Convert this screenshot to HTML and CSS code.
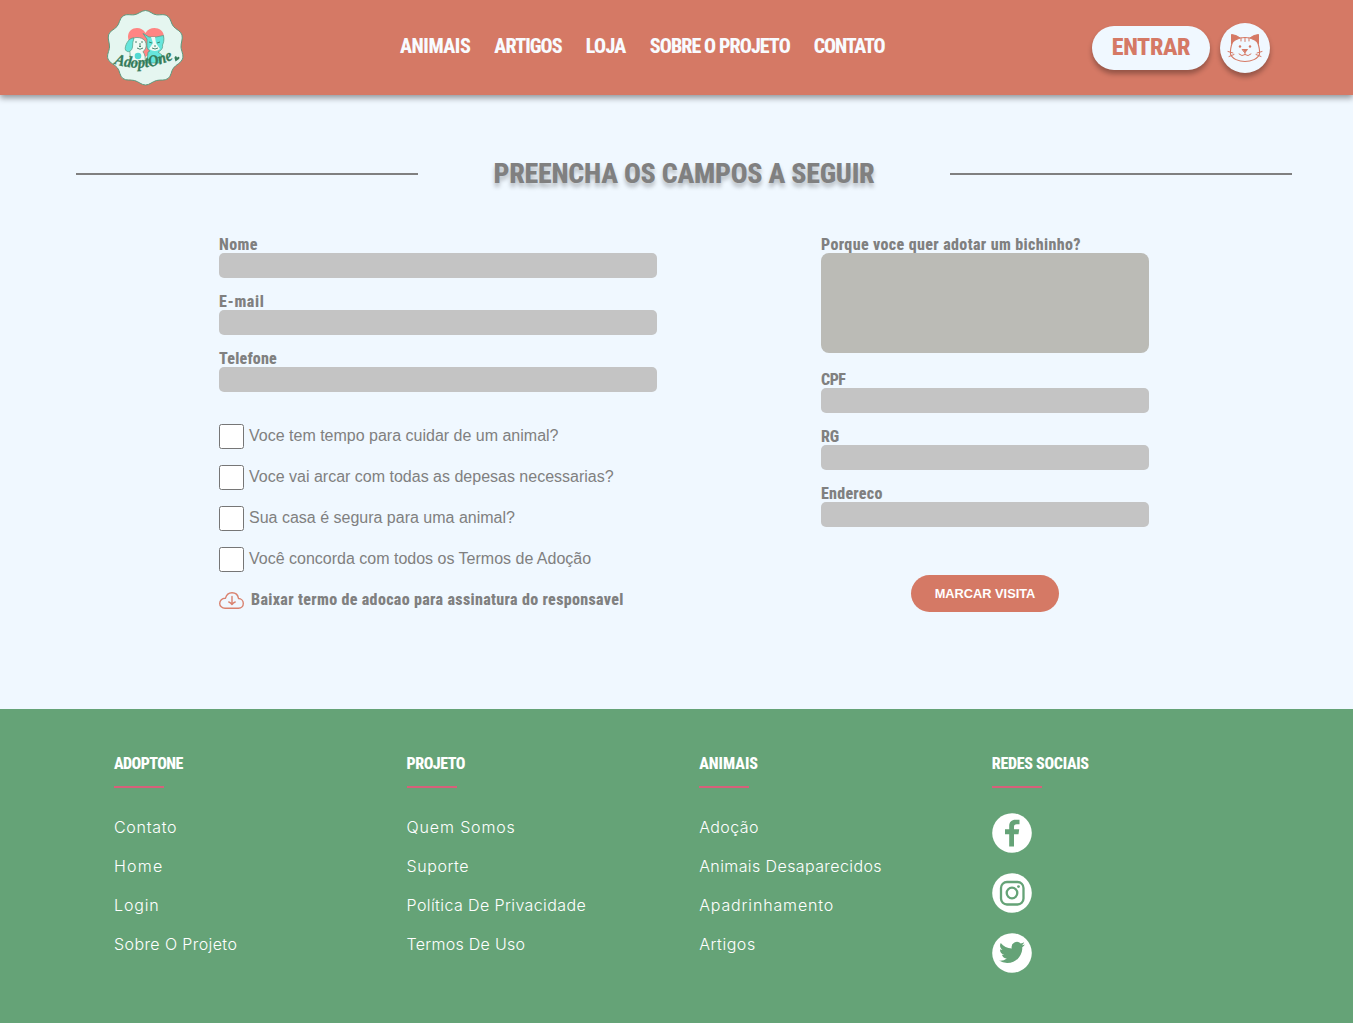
FILE: index.html
```html
<!DOCTYPE html>
<html lang="pt-BR">
<head>
<meta charset="utf-8">
<title>AdoptOne</title>
<link rel="stylesheet" href="styles.css">
</head>
<body>
<header class="header">
  <a class="logo" href="#" aria-label="AdoptOne">
    <svg width="78" height="78" viewBox="0 0 78 78">
      <path d="M39.500 1.500C43.500 1.500 46.500 5.500 50.500 5.800C54.500 6.200 58.500 4.500 62 7.500C65 10 65 14.500 67.500 17.500C70 20.500 75 22 76 26C77 30 74.800 34 75 38C75.200 42 78 46 76.500 50C75.200 54 70 55.500 67.500 59C65 62 65.500 67 62 69.500C58.500 72 54.500 70.500 50.500 71.500C46.500 72.500 43.500 76 39.500 76C35.500 76 32.500 72.500 28.500 71.500C24.500 70.500 20.500 72 17 69.500C13.500 67 14 62 11.500 59C9 55.500 3.300 54 2 50C.500 46 3.300 42 3.500 38C3.700 34 1.500 30 2.500 26C3.500 22 8.500 20.500 11 17.500C13.500 14.500 13.500 10 16.500 7.500C20 4.500 24 6.200 28 5.800C32 5.500 35.500 1.500 39.500 1.500Z" fill="#e5f6f0" stroke="#5b9a7e" stroke-width="1"/>
      <path d="M39.500 48C32 42 22 36 22 28C22 18 35 16 39.500 24C44 16 58 18 58 28C58 36 47 42 39.500 48Z" fill="#ff8583"/>
      <path d="M24 44C22 36 24 28 31 28.500C38 28.500 41 33 40 38C39.500 41 37 42 37 43Q40 46 39 54H24.500Z" fill="#effaf4" stroke="#519b82" stroke-width=".7"/>
      <path d="M28 29C22.500 28 18 38 19.500 41C22 44.500 26 42 26.500 38Q26.500 33 28 29Z" fill="#66e5dc" stroke="#519b82" stroke-width=".7"/>
      <path d="M37 24.500L43 28H50L57.500 26.500C58.500 31 57.500 34 56.500 36C57.500 41 52 43 52 43L56 46L55 54H41L42 43L44 42C39.500 40 41.500 34 41 30Z" fill="#66e5dc" stroke="#519b82" stroke-width=".7"/>
      <path d="M45 28L47 34L43 40Q49 44 54 40L50 34L49 28Z" fill="#effaf4"/>
      <circle cx="32" cy="47" r="3.300" fill="#53d9d2"/>
      <path d="M29 33h2M35 33h2M33 37.500h2M34 34v3M31 39q3 2.500 6 0M43 33l3 1M51 34l3-1M48 37h2M46 39q3 2 6 0" fill="none" stroke="#3b7c62" stroke-width=".9"/>
      <path id="logo-curve" d="M8 54.500Q37 65 70 49" fill="none"/>
      <text class="logo-text"><textPath href="#logo-curve" textLength="61" lengthAdjust="spacingAndGlyphs">AdoptOne</textPath></text>
      <path d="M68.500 49c0-2.500 2.500-2.500 2.500 0 1-2.500 3.500-1 2 1l-3.500 2.500Z" fill="#357b5a"/>
    </svg>
  </a>
  <nav class="nav">
    <a class="n1" href="#">ANIMAIS</a><a class="n2" href="#">ARTIGOS</a><a class="n3" href="#">LOJA</a><a class="n4" href="#">SOBRE O PROJETO</a><a class="n5" href="#">CONTATO</a>
  </nav>
  <div class="account">
    <a class="login" href="#">ENTRAR</a>
    <a class="avatar" href="#" aria-label="Perfil">
      <svg width="50" height="50" viewBox="0 0 50 50" fill="none" stroke="#d57965" stroke-width="1" stroke-linecap="round">
        <path d="M11.500 20.500L11.500 11.500Q17 12 20 15Q14.500 16.500 11.500 20.500ZM38.500 20.500L38.500 11.500Q33 12 30 15Q35.500 16.500 38.500 20.500Z" fill="#d57965"/>
        <path d="M20 15Q25 14 30 15M12.500 19Q10 26 10.500 31C12 36 19 38.500 25 38.500S38 36 39.500 31Q40 26 37.500 19" stroke-width="1.100"/>
        <path d="M21 15v3M25 14.500v4M29 15v3M8 28.500l5 1.500M9 33.500l5-2M42 28.500l-5 1.500M41 33.500l-5-2M25 29v2.500M19 31q3 3 6 .5q3 2.500 6-.5"/>
        <path d="M22.500 26.500h5l-2.500 3Z" fill="#d57965"/>
        <circle cx="20" cy="23.500" r="1.200" fill="#d57965" stroke="none"/><circle cx="30" cy="23.500" r="1.200" fill="#d57965" stroke="none"/>
      </svg>
    </a>
  </div>
</header>
<main class="main">
  <div class="title"><span class="rule"></span><h1>PREENCHA OS CAMPOS A SEGUIR</h1><span class="rule"></span></div>
  <form class="form">
    <div class="left">
      <label class="field"><span class="l1">Nome</span><input type="text"></label>
      <label class="field"><span class="l2">E-mail</span><input type="text"></label>
      <label class="field"><span class="l3">Telefone</span><input type="text"></label>
      <div class="checks">
        <label class="check"><input type="checkbox"><span>Voce tem tempo para cuidar de um animal?</span></label>
        <label class="check"><input type="checkbox"><span>Voce vai arcar com todas as depesas necessarias?</span></label>
        <label class="check"><input type="checkbox"><span>Sua casa é segura para uma animal?</span></label>
        <label class="check"><input type="checkbox"><span>Você concorda com todos os Termos de Adoção</span></label>
      </div>
      <a class="download" href="#">
        <svg width="25" height="17" viewBox="0 0 25 17" fill="none" stroke="#d9826f" stroke-width="1.400" stroke-linecap="round" stroke-linejoin="round"><path d="M6 16.300H19.500C22.500 16.300 24.300 14 24.300 11.500C24.300 8.500 22 6.500 19.500 6.500C19 3 16.500.700 13 .700C9.500.700 7.300 3 6.500 6.200C3 6 .700 8.500.700 11.500C.700 14 3 16.300 6 16.300ZM13 4.500V12.500M9.800 10Q11.500 10.500 13 12.500Q14.500 10.500 16.200 10"/></svg>
        <span>Baixar termo de adocao para assinatura do responsavel</span>
      </a>
    </div>
    <div class="right">
      <label class="field why"><span class="l4">Porque voce quer adotar um bichinho?</span><textarea></textarea></label>
      <label class="field"><span class="l5">CPF</span><input type="text"></label>
      <label class="field"><span class="l6">RG</span><input type="text"></label>
      <label class="field"><span class="l7">Endereco</span><input type="text"></label>
      <button class="submit" type="button">MARCAR VISITA</button>
    </div>
  </form>
</main>
<footer class="footer">
  <section class="col"><h2 class="f1">ADOPTONE</h2><ul><li class="s7">Contato</li><li class="s11">Home</li><li class="s8">Login</li><li class="s4">Sobre O Projeto</li></ul></section>
  <section class="col"><h2 class="f2">PROJETO</h2><ul><li class="s8">Quem Somos</li><li class="s5">Suporte</li><li class="s4">Política De Privacidade</li><li class="s3">Termos De Uso</li></ul></section>
  <section class="col"><h2 class="f3">ANIMAIS</h2><ul><li class="s4">Adoção</li><li class="s4">Animais Desaparecidos</li><li class="s8">Apadrinhamento</li><li class="s5">Artigos</li></ul></section>
  <section class="col"><h2 class="f4">REDES SOCIAIS</h2>
    <div class="social">
      <svg width="40" height="40" viewBox="0 0 40 40"><circle cx="20" cy="20" r="19.800" fill="#fff"/><path d="M17.200 33.500V21.200H13V16.200H17.200V13.500C17.200 9 19.500 6.800 23.500 6.800H27.500V11.200H24.800C22.500 11.200 22 12.200 22 14V16.200H27.200L26.500 21.200H22V33.500Z" fill="#65a377"/></svg>
      <svg width="40" height="40" viewBox="0 0 40 40" fill="none" stroke="#65a377" stroke-width="2.300"><circle cx="20" cy="20" r="19.800" fill="#fff" stroke="none"/><rect x="9" y="9" width="22.500" height="22.500" rx="6"/><circle cx="20" cy="20" r="5.300"/><circle cx="26.500" cy="13.600" r="1.400" fill="#65a377" stroke="none"/></svg>
      <svg width="40" height="40" viewBox="0 0 40 40"><circle cx="20" cy="20" r="19.800" fill="#fff"/><path transform="translate(7 6.500) scale(1.080)" d="M23.950 4.570a10 10 0 0 1-2.820.770 4.960 4.960 0 0 0 2.160-2.720c-.950.550-2 .950-3.130 1.180a4.920 4.920 0 0 0-8.380 4.480C7.690 8.100 4.070 6.130 1.640 3.160a4.820 4.820 0 0 0-.670 2.480c0 1.710.870 3.210 2.190 4.100a4.900 4.900 0 0 1-2.230-.620v.060a4.920 4.920 0 0 0 3.950 4.830 5 5 0 0 1-2.210.080 4.940 4.940 0 0 0 4.600 3.420A9.870 9.870 0 0 1 0 19.540a14 14 0 0 0 7.550 2.210c9.050 0 14-7.500 14-13.980 0-.210 0-.420-.020-.630a9.940 9.940 0 0 0 2.460-2.550Z" fill="#65a377"/></svg>
    </div>
  </section>
</footer>
</body>
</html>
```
FILE: styles.css
```css
* { box-sizing: border-box; }
body { margin: 0; background: #f0f8ff; color: gray; font-family: "Liberation Sans", Arial, sans-serif; }
a { color: inherit; text-decoration: none; }
.nav, .login, h1, h2, .field span, .download span {
  font-family: "Roboto Condensed", Roboto, sans-serif; font-stretch: 75%; font-weight: 800; white-space: nowrap;
}
.header { position: relative; height: 95px; display: flex; align-items: center; padding: 0 83px 0 106px; background: #d57965; box-shadow: 0 3px 6px rgba(0,0,0,.4); }
.logo { width: 78px; height: 78px; margin-right: 216px; }
.logo svg { display: block; }
.logo-text { font: italic bold 16px "Liberation Serif", serif; fill: #357b5a; stroke: #357b5a; stroke-width: .3px; }
.nav { display: flex; gap: 24px; flex: 1; font-size: 20px; color: #f8fbff; line-height: 24px; padding-bottom: 3px; }
.n1 { letter-spacing: -.45px; }
.n2 { letter-spacing: -.95px; }
.n3 { letter-spacing: -.65px; }
.n4 { letter-spacing: -.92px; }
.n5 { letter-spacing: -1.200px; }
.account { display: flex; align-items: center; gap: 10px; }
.login { width: 118px; height: 44px; border-radius: 22px; background: #f0f8ff; color: #d57965; font-size: 24px; line-height: 42px; letter-spacing: -.35px; text-align: center; box-shadow: 0 4px 5px rgba(0,0,0,.3); }
.avatar { width: 50px; height: 50px; border-radius: 50%; background: #f0f8ff; box-shadow: 0 4px 5px rgba(0,0,0,.3); }
.avatar svg { display: block; }
.main { height: 614px; padding-top: 58px; }
.title { display: flex; align-items: center; justify-content: space-between; margin: 0 61px 0 76px; height: 42px; }
.rule { width: 342px; height: 2px; background: gray; }
h1 { margin: 0; font-size: 28px; line-height: 42px; letter-spacing: -.27px; text-shadow: 0 4px 4px rgba(0,0,0,.25); }
.form { display: flex; gap: 164px; margin: 42px 0 0 219px; }
.left { width: 438px; }
.right { width: 328px; display: flex; flex-direction: column; }
.field { display: block; margin-bottom: 16px; }
.field span { display: block; height: 16px; font-size: 16px; line-height: 16px; }
.field .l1 { letter-spacing: .4px; }
.field .l2 { letter-spacing: .65px; }
.field .l3 { letter-spacing: .2px; }
.field .l4 { letter-spacing: .37px; }
.field .l5 { letter-spacing: -.5px; }
.field .l6 { letter-spacing: -.3px; }
.field .l7 { letter-spacing: .25px; }
.field input, .field textarea { display: block; width: 100%; height: 25px; border: 0; border-radius: 5px; background: #c4c4c4; resize: none; }
.field textarea { height: 100px; border-radius: 8px; background: #bbbbb6; }
.why { margin-bottom: 19px; }
.checks { margin-top: 32px; display: grid; gap: 16px; }
.check { display: flex; height: 25px; gap: 5px; font-size: 16px; line-height: 23px; }
.check input { width: 25px; height: 25px; margin: 0; appearance: none; background: #fff; border: 1px solid #767676; border-radius: 2.500px; }
.download { display: flex; align-items: center; gap: 7px; height: 20px; margin-top: 18px; font-size: 16px; line-height: 18px; letter-spacing: .34px; }
.submit { width: 148px; height: 37px; margin-top: 32px; align-self: center; border: 0; border-radius: 19px; background: #d57965; color: #fff; font: bold 12.800px "Liberation Sans", Arial, sans-serif; }
.footer { height: 314px; padding: 45px 0 0 114px; display: grid; grid-template-columns: repeat(4, 292.600px); background: #65a377; color: #fff; }
h2 { margin: 0 0 26px; height: 33px; font-size: 16px; line-height: 20px; }
h2::after { content: ""; display: block; width: 50px; height: 2px; margin-top: 12px; background: #d6607a; }
.f1 { letter-spacing: -.55px; }
.f2 { letter-spacing: -.5px; }
.f4 { letter-spacing: -.3px; }
ul { list-style: none; margin: 0; padding: 2px 0 0; font: 300 16px/24px Inter, sans-serif; }
li { height: 24px; margin-bottom: 15px; white-space: nowrap; }
.s3 { letter-spacing: .27px; }
.s4 { letter-spacing: .4px; }
.s5 { letter-spacing: .55px; }
.s7 { letter-spacing: .7px; }
.s8 { letter-spacing: .85px; }
.s11 { letter-spacing: 1.200px; }
.social { display: grid; gap: 20px; }
.social svg { display: block; }
```
